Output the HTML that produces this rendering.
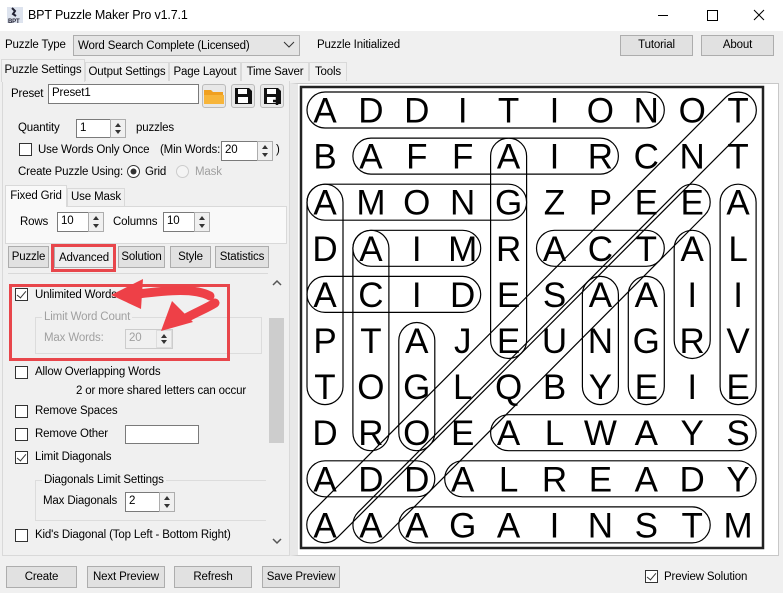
<!DOCTYPE html>
<html><head><meta charset="utf-8"><style>
*{margin:0;padding:0;box-sizing:border-box}
body{width:783px;height:593px;background:#f0f0f0;font-family:"Liberation Sans",sans-serif;font-size:11.5px;letter-spacing:-0.15px;color:#000;position:relative;overflow:hidden}
.a{position:absolute}
.t{position:absolute;white-space:nowrap;line-height:14px}
.btn{position:absolute;background:#e1e1e1;border:1px solid #adadad;text-align:center;white-space:nowrap;font-size:11.5px}
.tb{position:absolute;background:#fff;border:1px solid #7a7a7a;padding-left:3px;line-height:17px;white-space:nowrap}
.sp{position:absolute;width:16px;border:1px solid #adadad;background:#f0f0f0}
.sp:before{content:"";position:absolute;left:4px;top:3px;border:3px solid transparent;border-bottom:4px solid #333;border-top:0}
.sp:after{content:"";position:absolute;left:4px;bottom:3px;border:3px solid transparent;border-top:4px solid #333;border-bottom:0}
.cb{position:absolute;width:13px;height:13px;border:1px solid #333;background:#fff}
.ck:after{content:"";position:absolute;left:3px;top:0px;width:4px;height:8px;border:solid #333;border-width:0 1.5px 1.5px 0;transform:rotate(40deg)}
.tab{position:absolute;border:1px solid #d9d9d9;border-bottom:none;background:#f0f0f0;text-align:center;line-height:18px;white-space:nowrap;overflow:hidden}
</style></head><body>
<div class="a" style="left:0;top:0;width:783px;height:31px;background:#fff"></div>
<svg class="a" style="left:6px;top:6px" width="18" height="18"><rect x="1" y="1" width="16" height="16" fill="#dde3ee"/><path d="M6 2 L9 5 L7 8 L10 10" stroke="#223" stroke-width="2" fill="none"/><text x="2" y="17" font-size="6" font-family="Liberation Sans" font-weight="bold" fill="#223">BPT</text></svg>
<div class="t" style="left:28px;top:8px;font-size:12.5px">BPT Puzzle Maker Pro v1.7.1</div>
<svg class="a" style="left:650px;top:5px" width="130" height="22"><line x1="8" y1="10.5" x2="18" y2="10.5" stroke="#000"/><rect x="57.5" y="5.5" width="10" height="10" fill="none" stroke="#000"/><path d="M104 5 L114 15 M114 5 L104 15" stroke="#000"/></svg>
<div class="t" style="left:5px;top:38px">Puzzle Type</div>
<div class="a" style="left:73px;top:35px;width:227px;height:21px;background:#e5e5e5;border:1px solid #adadad"></div>
<div class="t" style="left:78px;top:39px">Word Search Complete (Licensed)</div>
<svg class="a" style="left:283px;top:41px" width="12" height="8"><path d="M1 1 L6 6 L11 1" stroke="#333" fill="none"/></svg>
<div class="t" style="left:317px;top:38px">Puzzle Initialized</div>
<div class="btn" style="left:620px;top:35px;width:73px;height:21px;line-height:19px">Tutorial</div>
<div class="btn" style="left:701px;top:35px;width:73px;height:21px;line-height:19px">About</div>
<div class="a" style="left:2px;top:80px;width:288px;height:476px;border:1px solid #d9d9d9;background:#f0f0f0"></div>
<div class="tab" style="left:85px;top:62px;width:84px;height:19px">Output Settings</div>
<div class="tab" style="left:169px;top:62px;width:72px;height:19px">Page Layout</div>
<div class="tab" style="left:241px;top:62px;width:68px;height:19px">Time Saver</div>
<div class="tab" style="left:309px;top:62px;width:38px;height:19px">Tools</div>
<div class="tab" style="left:1px;top:59px;width:84px;height:23px;line-height:20px;background:#f0f0f0">Puzzle Settings</div>
<div class="t" style="left:11px;top:87px">Preset</div>
<div class="tb" style="left:48px;top:84px;width:151px;height:20px">Preset1</div>
<div class="a" style="left:202px;top:84px;width:24px;height:24px;border:1px solid #bbb;border-radius:3px;background:#e8e8e8"></div>
<svg class="a" style="left:203px;top:87px" width="22" height="18"><path d="M1 3 h7 l2 2 h10 v12 h-19z" fill="#f0a020"/><path d="M1 8 h20 v9 h-20z" fill="#f7b53a"/></svg>
<div class="a" style="left:231px;top:84px;width:24px;height:24px;border:1px solid #bbb;border-radius:3px;background:#e8e8e8"></div>
<svg class="a" style="left:233px;top:86px" width="20" height="20"><path d="M2 2 h14 l3 3 v13 h-17z" fill="#111"/><rect x="5" y="3" width="9" height="5" fill="#fff"/><rect x="5" y="11" width="10" height="6" fill="#fff"/></svg>
<div class="a" style="left:260px;top:84px;width:24px;height:24px;border:1px solid #bbb;border-radius:3px;background:#e8e8e8"></div>
<svg class="a" style="left:262px;top:86px" width="20" height="20"><path d="M2 2 h14 l3 3 v13 h-17z" fill="#111"/><rect x="5" y="3" width="9" height="5" fill="#fff"/><rect x="5" y="11" width="10" height="6" fill="#fff"/><path d="M15 11 v8 M11 15 h8" stroke="#111" stroke-width="2.5"/></svg>
<div class="t" style="left:18px;top:121px">Quantity</div>
<div class="tb" style="left:76px;top:119px;width:35px;height:19px">1</div>
<div class="sp" style="left:110px;top:119px;height:19px"></div>
<div class="t" style="left:136px;top:121px">puzzles</div>
<div class="cb" style="left:19px;top:143px"></div>
<div class="t" style="left:38px;top:143px">Use Words Only Once</div>
<div class="t" style="left:160px;top:143px">(Min Words:</div>
<div class="tb" style="left:221px;top:141px;width:38px;height:20px">20</div>
<div class="sp" style="left:257px;top:141px;height:20px"></div>
<div class="t" style="left:276px;top:143px">)</div>
<div class="t" style="left:18px;top:165px">Create Puzzle Using:</div>
<svg class="a" style="left:126px;top:164px" width="16" height="16"><circle cx="7.5" cy="7.5" r="6" fill="#fff" stroke="#333"/><circle cx="7.5" cy="7.5" r="3" fill="#333"/></svg>
<div class="t" style="left:145px;top:165px">Grid</div>
<svg class="a" style="left:175px;top:164px" width="16" height="16"><circle cx="7.5" cy="7.5" r="6" fill="#f4f4f4" stroke="#ccc"/></svg>
<div class="t" style="left:195px;top:165px;color:#a0a0a0">Mask</div>
<div class="a" style="left:5px;top:206px;width:282px;height:38px;border:1px solid #d9d9d9;background:#f9f9f9"></div>
<div class="tab" style="left:67px;top:188px;width:58px;height:18px;line-height:17px">Use Mask</div>
<div class="tab" style="left:5px;top:185px;width:62px;height:22px;line-height:20px;background:#f9f9f9">Fixed Grid</div>
<div class="t" style="left:20px;top:215px">Rows</div>
<div class="tb" style="left:57px;top:212px;width:33px;height:20px">10</div>
<div class="sp" style="left:88px;top:212px;height:20px"></div>
<div class="t" style="left:113px;top:215px">Columns</div>
<div class="tb" style="left:163px;top:212px;width:33px;height:20px">10</div>
<div class="sp" style="left:194px;top:212px;height:20px"></div>
<div class="btn" style="left:8px;top:246px;width:41px;height:22px;line-height:20px">Puzzle</div>
<div class="btn" style="left:54px;top:246px;width:60px;height:22px;line-height:22px;background:#eee">Advanced</div>
<div class="a" style="left:51px;top:244px;width:65px;height:28px;border:3px solid #e8464b"></div>
<div class="btn" style="left:118px;top:246px;width:47px;height:22px;line-height:20px">Solution</div>
<div class="btn" style="left:170px;top:246px;width:41px;height:22px;line-height:20px">Style</div>
<div class="btn" style="left:215px;top:246px;width:54px;height:22px;line-height:20px">Statistics</div>
<div class="a" style="left:8px;top:273px;width:260px;height:1px;background:#d9d9d9"></div>
<div class="a" style="left:268px;top:273px;width:17px;height:276px;background:#f0f0f0"></div>
<div class="a" style="left:269px;top:318px;width:15px;height:125px;background:#cdcdcd"></div>
<svg class="a" style="left:270px;top:277px" width="14" height="270"><path d="M3 8 L7 4 L11 8" stroke="#555" stroke-width="1.5" fill="none"/><path d="M3 262 L7 266 L11 262" stroke="#555" stroke-width="1.5" fill="none"/></svg>
<div class="cb ck" style="left:15px;top:288px"></div>
<div class="t" style="left:35px;top:288px">Unlimited Words</div>
<div class="a" style="left:35px;top:317px;width:227px;height:37px;border:1px solid #dcdcdc"></div>
<div class="t" style="left:42px;top:310px;color:#a0a0a0;background:#f0f0f0;padding:0 2px">Limit Word Count</div>
<div class="t" style="left:44px;top:331px;color:#a0a0a0">Max Words:</div>
<div class="tb" style="left:125px;top:329px;width:48px;height:20px;border-color:#ccc;background:#f0f0f0;color:#a0a0a0">20</div>
<div class="sp" style="left:156px;top:330px;height:18px;border-color:#ddd"></div>
<div class="a" style="left:9px;top:284px;width:221px;height:77px;border:3px solid #e8464b"></div>
<div class="cb" style="left:15px;top:366px"></div>
<div class="t" style="left:35px;top:365px">Allow Overlapping Words</div>
<div class="t" style="left:76px;top:384px">2 or more shared letters can occur</div>
<div class="cb" style="left:15px;top:405px"></div>
<div class="t" style="left:35px;top:404px">Remove Spaces</div>
<div class="cb" style="left:15px;top:428px"></div>
<div class="t" style="left:35px;top:427px">Remove Other</div>
<div class="tb" style="left:125px;top:425px;width:74px;height:19px"></div>
<div class="cb ck" style="left:15px;top:451px"></div>
<div class="t" style="left:35px;top:450px">Limit Diagonals</div>
<div class="a" style="left:35px;top:480px;width:231px;height:41px;border:1px solid #dcdcdc;border-right:none"></div>
<div class="t" style="left:42px;top:473px;background:#f0f0f0;padding:0 2px">Diagonals Limit Settings</div>
<div class="t" style="left:43px;top:494px">Max Diagonals</div>
<div class="tb" style="left:125px;top:492px;width:36px;height:20px">2</div>
<div class="sp" style="left:159px;top:492px;height:20px"></div>
<div class="cb" style="left:15px;top:529px"></div>
<div class="t" style="left:35px;top:528px">Kid's Diagonal (Top Left - Bottom Right)</div>
<svg class="a" style="left:0;top:0" width="300" height="360">
<path d="M210 296 C 195 288, 170 290, 138 294" stroke="#ee4047" stroke-width="9" fill="none" stroke-linecap="round"/>
<polygon points="111,295 143,279 141,309" fill="#ee4047"/>
<path d="M215 303 C 207 308, 197 312, 186 318" stroke="#ee4047" stroke-width="9" fill="none" stroke-linecap="round"/>
<polygon points="161,331 172,301 193,322" fill="#ee4047"/>
</svg>
<div class="btn" style="left:6px;top:566px;width:71px;height:22px;line-height:20px">Create</div>
<div class="btn" style="left:87px;top:566px;width:78px;height:22px;line-height:20px">Next Preview</div>
<div class="btn" style="left:174px;top:566px;width:78px;height:22px;line-height:20px">Refresh</div>
<div class="btn" style="left:262px;top:566px;width:78px;height:22px;line-height:20px">Save Preview</div>
<div class="cb ck" style="left:645px;top:570px"></div>
<div class="t" style="left:664px;top:570px">Preview Solution</div>
<div class="a" style="left:290px;top:83px;width:489px;height:473px;background:#fff;border:1px solid #c8c8c8;border-left:8px solid #e8e8e8"></div>
<svg class="a" style="left:0;top:0" width="783" height="593">
<rect x="301" y="87" width="462" height="461" fill="#fff" stroke="#222" stroke-width="2.5"/>
<g fill="none" stroke="#000" stroke-width="1.2">
<rect x="307" y="92" width="357.3" height="36" rx="18"/>
<rect x="352.9" y="138.1" width="265.5" height="36" rx="18"/>
<rect x="307" y="184.2" width="219.6" height="36" rx="18"/>
<rect x="352.9" y="230.3" width="127.8" height="36" rx="18"/>
<rect x="536.5" y="230.3" width="127.8" height="36" rx="18"/>
<rect x="307" y="276.4" width="173.7" height="36" rx="18"/>
<rect x="490.6" y="414.7" width="265.5" height="36" rx="18"/>
<rect x="307" y="460.8" width="127.8" height="36" rx="18"/>
<rect x="444.7" y="460.8" width="311.4" height="36" rx="18"/>
<rect x="398.8" y="506.9" width="311.4" height="36" rx="18"/>
<rect x="490.6" y="138.1" width="36" height="220.4" rx="18"/>
<rect x="307" y="184.2" width="36" height="220.4" rx="18"/>
<rect x="352.9" y="230.3" width="36" height="220.4" rx="18"/>
<rect x="398.8" y="322.5" width="36" height="128.2" rx="18"/>
<rect x="582.4" y="276.4" width="36" height="128.2" rx="18"/>
<rect x="628.3" y="276.4" width="36" height="128.2" rx="18"/>
<rect x="674.2" y="230.3" width="36" height="128.2" rx="18"/>
<rect x="720.1" y="184.2" width="36" height="220.4" rx="18"/>
<rect x="-310.8" y="-18" width="621.6" height="36" rx="18" transform="translate(531.55 317.45) rotate(-45.07)"/>
<rect x="-245.7" y="-18" width="491.4" height="36" rx="18" transform="translate(531.55 363.55) rotate(-45.13)"/>
</g>
<g font-family="Liberation Sans, sans-serif" font-size="35" text-anchor="middle" fill="#000" letter-spacing="0">
<text y="122.5"><tspan x="325">A</tspan><tspan x="370.9">D</tspan><tspan x="416.8">D</tspan><tspan x="462.7">I</tspan><tspan x="508.6">T</tspan><tspan x="554.5">I</tspan><tspan x="600.4">O</tspan><tspan x="646.3">N</tspan><tspan x="692.2">O</tspan><tspan x="738.1">T</tspan></text>
<text y="168.6"><tspan x="325">B</tspan><tspan x="370.9">A</tspan><tspan x="416.8">F</tspan><tspan x="462.7">F</tspan><tspan x="508.6">A</tspan><tspan x="554.5">I</tspan><tspan x="600.4">R</tspan><tspan x="646.3">C</tspan><tspan x="692.2">N</tspan><tspan x="738.1">T</tspan></text>
<text y="214.7"><tspan x="325">A</tspan><tspan x="370.9">M</tspan><tspan x="416.8">O</tspan><tspan x="462.7">N</tspan><tspan x="508.6">G</tspan><tspan x="554.5">Z</tspan><tspan x="600.4">P</tspan><tspan x="646.3">E</tspan><tspan x="692.2">E</tspan><tspan x="738.1">A</tspan></text>
<text y="260.8"><tspan x="325">D</tspan><tspan x="370.9">A</tspan><tspan x="416.8">I</tspan><tspan x="462.7">M</tspan><tspan x="508.6">R</tspan><tspan x="554.5">A</tspan><tspan x="600.4">C</tspan><tspan x="646.3">T</tspan><tspan x="692.2">A</tspan><tspan x="738.1">L</tspan></text>
<text y="306.9"><tspan x="325">A</tspan><tspan x="370.9">C</tspan><tspan x="416.8">I</tspan><tspan x="462.7">D</tspan><tspan x="508.6">E</tspan><tspan x="554.5">S</tspan><tspan x="600.4">A</tspan><tspan x="646.3">A</tspan><tspan x="692.2">I</tspan><tspan x="738.1">I</tspan></text>
<text y="353"><tspan x="325">P</tspan><tspan x="370.9">T</tspan><tspan x="416.8">A</tspan><tspan x="462.7">J</tspan><tspan x="508.6">E</tspan><tspan x="554.5">U</tspan><tspan x="600.4">N</tspan><tspan x="646.3">G</tspan><tspan x="692.2">R</tspan><tspan x="738.1">V</tspan></text>
<text y="399.1"><tspan x="325">T</tspan><tspan x="370.9">O</tspan><tspan x="416.8">G</tspan><tspan x="462.7">L</tspan><tspan x="508.6">Q</tspan><tspan x="554.5">B</tspan><tspan x="600.4">Y</tspan><tspan x="646.3">E</tspan><tspan x="692.2">I</tspan><tspan x="738.1">E</tspan></text>
<text y="445.2"><tspan x="325">D</tspan><tspan x="370.9">R</tspan><tspan x="416.8">O</tspan><tspan x="462.7">E</tspan><tspan x="508.6">A</tspan><tspan x="554.5">L</tspan><tspan x="600.4">W</tspan><tspan x="646.3">A</tspan><tspan x="692.2">Y</tspan><tspan x="738.1">S</tspan></text>
<text y="491.3"><tspan x="325">A</tspan><tspan x="370.9">D</tspan><tspan x="416.8">D</tspan><tspan x="462.7">A</tspan><tspan x="508.6">L</tspan><tspan x="554.5">R</tspan><tspan x="600.4">E</tspan><tspan x="646.3">A</tspan><tspan x="692.2">D</tspan><tspan x="738.1">Y</tspan></text>
<text y="537.4"><tspan x="325">A</tspan><tspan x="370.9">A</tspan><tspan x="416.8">A</tspan><tspan x="462.7">G</tspan><tspan x="508.6">A</tspan><tspan x="554.5">I</tspan><tspan x="600.4">N</tspan><tspan x="646.3">S</tspan><tspan x="692.2">T</tspan><tspan x="738.1">M</tspan></text>
</g>
</svg>
</body></html>
